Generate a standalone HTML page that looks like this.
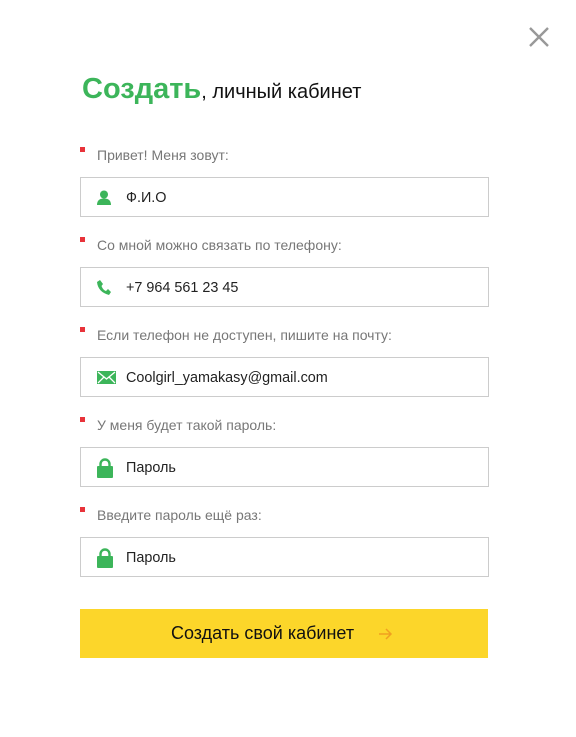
<!DOCTYPE html><html><head><meta charset="utf-8"><style>
body{margin:0;width:576px;height:737px;background:#fff;font-family:"Liberation Sans",sans-serif;position:relative;overflow:hidden}
.a{position:absolute}
h1{position:absolute;left:82px;top:73px;margin:0;font-weight:normal;font-size:20px;color:#111;white-space:nowrap}
h1 b{color:#3cb55a;font-size:29px;font-weight:bold}
.lab{position:absolute;left:97px;font-size:14px;color:#777}
.sq{position:absolute;left:80px;width:5px;height:5px;background:#e8333a}
.in{position:absolute;left:80px;width:407px;height:38px;border:1px solid #ccc;box-sizing:content-box}
.in span{position:absolute;left:45px;top:12px;font-size:14.4px;color:#222}
.in svg{position:absolute}
.btn{position:absolute;left:80px;top:609px;width:408px;height:49px;background:#fcd62a;font-size:18px;color:#111}
.btn span{position:absolute;left:91px;top:14px}
</style></head><body>
<svg class="a" style="left:527px;top:25px" width="24" height="24"><path d="M3 3L21 21M21 3L3 21" stroke="#999" stroke-width="2.4"/></svg>
<h1><b>Создать</b>, личный кабинет</h1>

<div class="sq" style="top:147px"></div><div class="lab" style="top:147px">Привет! Меня зовут:</div>
<div class="in" style="top:177px"><svg style="left:16px;top:12px" width="14" height="16"><circle cx="7" cy="4.5" r="4" fill="#3cb55a"/><path d="M0 15Q0 8.5 7 8.5Q14 8.5 14 15Z" fill="#3cb55a"/></svg><span>Ф.И.О</span></div>

<div class="sq" style="top:237px"></div><div class="lab" style="top:237px">Со мной можно связать по телефону:</div>
<div class="in" style="top:267px"><svg style="left:16px;top:12px" width="14" height="15"><path d="M3 0L6 4L4.5 6Q6 10 9 11L11 9L14 12L12 15Q1 12 0 2Z" fill="#3cb55a"/></svg><span>+7 964 561 23 45</span></div>

<div class="sq" style="top:327px"></div><div class="lab" style="top:327px">Если телефон не доступен, пишите на почту:</div>
<div class="in" style="top:357px"><svg style="left:16px;top:13px" width="19" height="13"><rect width="19" height="13" fill="#3cb55a"/><path d="M1 1L9.5 8L18 1M1 12L7 6M18 12L12 6" stroke="#fff" stroke-width="1.3" fill="none"/></svg><span>Coolgirl_yamakasy@gmail.com</span></div>

<div class="sq" style="top:417px"></div><div class="lab" style="top:417px">У меня будет такой пароль:</div>
<div class="in" style="top:447px"><svg style="left:16px;top:10px" width="16" height="20"><path d="M3.5 9V6A4.5 4.5 0 0 1 12.5 6V9" stroke="#3cb55a" stroke-width="2.4" fill="none"/><rect y="8" width="16" height="12" rx="1" fill="#3cb55a"/></svg><span>Пароль</span></div>

<div class="sq" style="top:507px"></div><div class="lab" style="top:507px">Введите пароль ещё раз:</div>
<div class="in" style="top:537px"><svg style="left:16px;top:10px" width="16" height="20"><path d="M3.5 9V6A4.5 4.5 0 0 1 12.5 6V9" stroke="#3cb55a" stroke-width="2.4" fill="none"/><rect y="8" width="16" height="12" rx="1" fill="#3cb55a"/></svg><span>Пароль</span></div>

<div class="btn"><span>Создать свой кабинет</span><svg class="a" style="left:299px;top:19px" width="14" height="12"><path d="M0 6H12M7 1L12 6L7 11" stroke="#f0a020" stroke-width="1.5" fill="none"/></svg></div>
</body></html>
